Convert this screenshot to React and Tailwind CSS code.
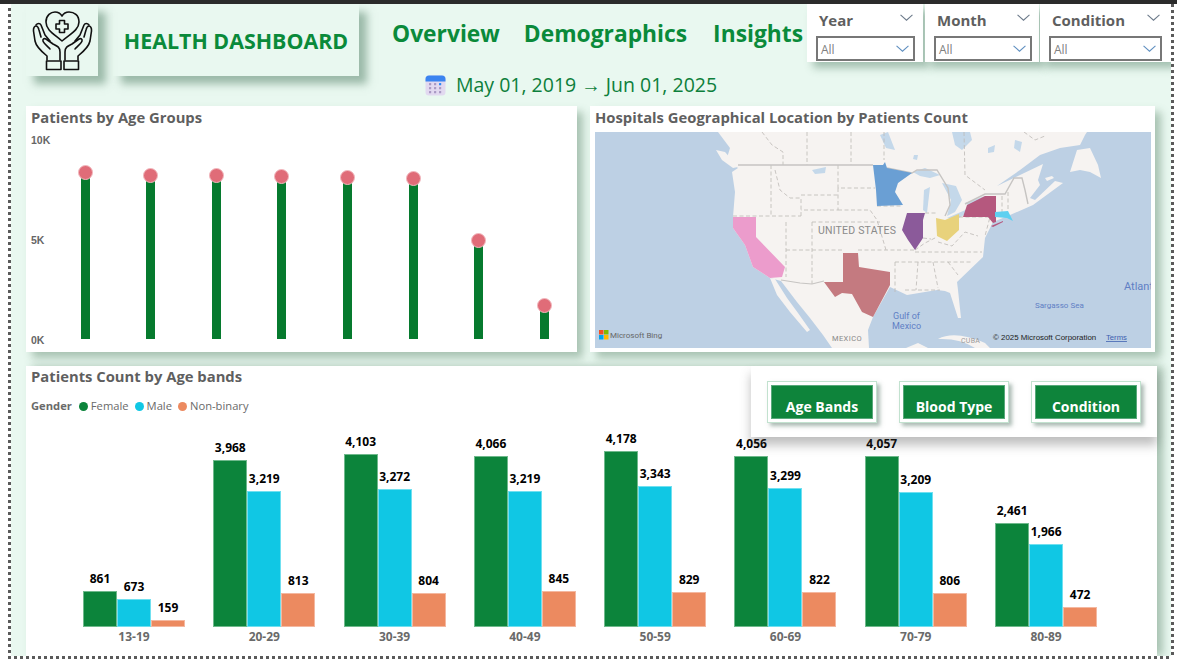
import React from "react";

const ageGroups = [8300, 8150, 8150, 8100, 8050, 8000, 4900, 1650];

const bands = [
  { label: "13-19", vals: [861, 673, 159] },
  { label: "20-29", vals: [3968, 3219, 813] },
  { label: "30-39", vals: [4103, 3272, 804] },
  { label: "40-49", vals: [4066, 3219, 845] },
  { label: "50-59", vals: [4178, 3343, 829] },
  { label: "60-69", vals: [4056, 3299, 822] },
  { label: "70-79", vals: [4057, 3209, 806] },
  { label: "80-89", vals: [2461, 1966, 472] },
];

const barColors = [
  "bg-[#0c843b] border-[#6fb98c]",
  "bg-[#10c7e4] border-[#70e0f0]",
  "bg-[#ec8a60] border-[#f4b8a0]",
];

const slicers = [
  { name: "Year", cls: "w-[116px] mr-[2px]", box: "w-[99px]", pad: "pl-[9px] pr-[8px]" },
  { name: "Month", cls: "w-[114px] mr-px", box: "w-[98px]", pad: "pl-[9px] pr-[7px]" },
  { name: "Condition", cls: "w-[131px]", box: "w-[113px]", pad: "pl-[9px] pr-[9px]" },
];

function Chevron({ className }) {
  return (
    <svg viewBox="0 0 12 6" className={className} fill="none" stroke="currentColor" strokeWidth="1">
      <path d="M0.5 0.5 L6 5.5 L11.5 0.5" />
    </svg>
  );
}

function Logo() {
  return (
    <svg viewBox="26 4 72 72" className="w-[72px] h-[72px]" fill="none" stroke="#111" strokeWidth="1.6" strokeLinejoin="round" strokeLinecap="round">
      {/* heart */}
      <path d="M62 41 C54 34 46 30 46 22 C46 15 51 12 55 12 C58 12 60.5 13.5 62 16 C63.5 13.5 66 12 69 12 C74 12 79 15 79 22 C79 30 70 34 62 41 Z" />
      <path d="M59.5 20.5 h5 v3.5 h3.5 v5 h-3.5 v3.5 h-5 v-3.5 h-3.5 v-5 h3.5 Z" />
      {/* left hand */}
      <path d="M47 60 V56 C42 52 36 46 35 41 L33.5 31 C33.2 28 34.5 26 36 26 C37.5 26 38.5 28 39 30 L41 37" />
      <path d="M36 25 C37.5 23 40 23 41 25 L45 35 L50 41" />
      <path d="M60 60 V52 C60 47 57 46 53 44 L46 39 C44 38 42.5 39 43 41 C43.5 43 47 46 50 49" />
      <rect x="46.5" y="61" width="14.5" height="8.5" />
      {/* right hand */}
      <path d="M78 60 V56 C83 52 89 46 90 41 L91.5 31 C91.8 28 90.5 26 89 26 C87.5 26 86.5 28 86 30 L84 37" />
      <path d="M89 25 C87.5 23 85 23 84 25 L80 35 L75 41" />
      <path d="M65 60 V52 C65 47 68 46 72 44 L79 39 C81 38 82.5 39 82 41 C81.5 43 78 46 75 49" />
      <rect x="64" y="61" width="14.5" height="8.5" />
    </svg>
  );
}

function CalendarIcon() {
  return (
    <svg viewBox="0 0 21 21" className="w-[21px] h-[21px]">
      <rect x="0.5" y="0.5" width="20" height="20" rx="3.5" fill="#e2d9f0" />
      <path d="M0.5 6.5 V4 a3.5 3.5 0 0 1 3.5 -3.5 H17 a3.5 3.5 0 0 1 3.5 3.5 V6.5 Z" fill="#3b84f0" />
      {[5, 10, 15].map((x) =>
        [9, 13, 17].map((y) => (
          <rect key={x + "-" + y} x={x - 1} y={y - 1} width="2.2" height="2.2" rx="0.5" fill={x === 15 && y === 9 ? "#2f8af5" : "#a999c4"} />
        ))
      )}
    </svg>
  );
}

// borders are page coordinates, the svg viewBox starts at the map's corner
const stateLines = [
  "M762 132 L772 145 L783 152 L783 165", "M807 132 V165", "M851 132 V165", "M884 132 V160",
  "M771 165 V216", "M733 216 H801", "M775 170 L780 190 L790 198 H801 V216",
  "M838 165 V188 H875", "M801 195 H838", "M838 188 V210 H801", "M838 210 H870 L877 220 L886 250",
  "M786 222 V277", "M812 222 H880", "M812 222 V284", "M786 250 H843",
  "M858 250 H915",
  "M877 206 H903",
  "M915 250 L925 243 L937 237", "M925 213 H936", "M923 238 L931 239",
  "M915 252 H982", "M895 262 H972", "M895 262 V292", "M918 262 L916 290", "M933 262 L938 288", "M948 262 L958 275",
  "M905 290 H940", "M938 242 L952 246 L965 232 L978 236", "M959 217 H990 L985 236",
  "M964 132 L965 175 L985 190", "M1002 196 V212", "M1008 192 V211",
  "M1024 132 L1035 140 L1045 136",
];

function MapPanel() {
  return (
    <svg viewBox="595 132 556 216" className="w-[556px] h-[216px] block">
      <rect x="595" y="132" width="556" height="216" fill="#bdd0e4" />
      {/* land */}
      <path fill="#f6f3f1" d="M718 132 L730 148 L727 158 L738 168 L732 172 L735 192 L733 217 L733 228 L745 245 L753 267 L770 278 L781 281 L797 302 L810 318 L823 335 L832 348 H869 L868 330 L873 317 L890 287 L907 295 L937 290 L945 291 L950 293 L958 318 L961 318 L958 290 L957 282 L983 257 L985 238 L993 222 L1010 215 L1033 205 L1063 183 L1055 181 L1035 200 L1030 198 L1040 185 L1038 180 L1043 164 L1020 175 L997 186 L1020 170 L1040 155 L1060 148 L1080 145 L1085 135 L1087 132 Z" />
      <path fill="#f6f3f1" d="M1077 150 L1090 148 L1098 165 L1101 178 L1090 172 L1080 170 L1070 172 Z" />
      <path fill="#f6f3f1" d="M1045 178 L1052 176 L1054 178 L1047 181 Z" />
      {/* vancouver island and baja */}
      <path fill="#f6f3f1" d="M716 150 L725 152 L738 167 L733 168 L722 160 Z" />
      <path fill="#f6f3f1" d="M770 278 L777 295 L790 312 L807 332 L810 330 L798 313 L787 298 L775 279 Z" />
      {/* cuba and islands */}
      <path fill="#f6f3f1" d="M938 339 Q955 330 985 343 L990 348 H975 Q960 338 938 339 Z" />
      <path fill="#f6f3f1" d="M906 348 L918 343 L928 348 Z" />
      {/* lakes and bays */}
      <g fill="#c4d8ea">
        <path d="M952 132 H970 L972 140 L962 150 L955 145 Z" />
        <path d="M913 172 L925 168 L940 175 L930 178 L920 176 Z" />
        <path d="M924 190 L930 187 L927 213 L923 210 Z" />
        <path d="M942 183 L956 186 L962 200 L955 212 L947 216 L951 200 Z" />
        <path d="M947 218 L970 208 L973 210 L955 220 Z" />
        <path d="M965 203 L985 196 L986 199 L970 206 Z" />
        <path d="M880 135 L888 132 L895 150 L886 148 Z" />
        <path d="M812 170 L826 167 L825 173 L815 174 Z" />
        <path d="M914 155 L918 155 L917 160 L913 159 Z" />
        <path d="M988 148 L995 145 L994 152 L988 153 Z" />
        <path d="M1015 140 L1022 142 L1020 152 L1014 148 Z" />
      </g>
      {/* state borders */}
      <g fill="none" stroke="#bdb9b5" strokeWidth="0.8" strokeDasharray="4 2.5">
        {stateLines.map((d) => (
          <path key={d} d={d} />
        ))}
      </g>
      {/* national border */}
      <path d="M738 165 H873 M887 168 L912 173 L917 170 L937 170 L948 188 L950 205 L945 216 M965 204 L985 194 L1005 194 L1014 178 L1022 178 L1025 190 L1028 204" fill="none" stroke="#c6c4c2" strokeWidth="1.4" />
      <path d="M781 280 L800 283 L812 284 L824 281" fill="none" stroke="#c6c4c2" strokeWidth="1.2" />
      {/* highlighted states */}
      <path fill="#6a9fd4" d="M873 165 H883 L885 162 L887 168 L912 173 L898 183 L895 192 L903 205 L877 206 L876 190 Z" />
      <path fill="#8b5a9a" d="M907 213 H925 L923 220 L923 238 L915 250 L908 240 L902 230 Z" />
      <path fill="#e8d27c" d="M936 218 L945 220 L959 214 V230 L947 241 L937 236 Z" />
      <path fill="#b5587e" d="M963 217 L967 205 L985 196 H996 V222 L993 223 L988 217 Z" />
      <path fill="#b5587e" d="M991 226 L1003 221 L1003 222 L993 227 Z" />
      <path fill="#5ed0f0" d="M995 212 L1008 211 L1013 221 L1007 218 L995 217 Z" />
      <path fill="#ec9ccc" d="M733 217 H756 V237 L785 267 L782 277 L770 278 L753 267 L745 245 L733 228 Z" />
      <path fill="#c47a80" d="M843 253 H858 L859 267 L890 272 V285 L873 317 L862 312 L852 294 L842 293 L835 297 L824 282 H843 Z" />
      {/* map labels */}
      <g fontFamily="Roboto, sans-serif">
        <text x="818" y="234" fontSize="10.5" fill="#8a8a8a" letterSpacing="0.2">UNITED STATES</text>
        <text x="832" y="341" fontSize="7.5" fill="#888" letterSpacing="0.4">MEXICO</text>
        <text x="961" y="343" fontSize="7" fill="#999" letterSpacing="0.3">CUBA</text>
        <text x="893" y="319" fontSize="9" fill="#5f7fc4">Gulf of</text>
        <text x="892" y="329" fontSize="9" fill="#5f7fc4">Mexico</text>
        <text x="1035" y="308" fontSize="8" fill="#5f7fc4">Sargasso Sea</text>
        <text x="1124" y="290" fontSize="11" fill="#5f7fc4">Atlant</text>
      </g>
      {/* bing attribution */}
      <rect x="599" y="330" width="4.5" height="4.5" fill="#f25022" />
      <rect x="604" y="330" width="4.5" height="4.5" fill="#7fba00" />
      <rect x="599" y="335" width="4.5" height="4.5" fill="#00a4ef" />
      <rect x="604" y="335" width="4.5" height="4.5" fill="#ffb900" />
      <text x="610" y="338" fontSize="8" fill="#666" fontFamily="Roboto, sans-serif">Microsoft Bing</text>
      <text x="993" y="340" fontSize="7.9" fill="#222" fontFamily="'Liberation Sans', sans-serif">© 2025 Microsoft Corporation</text>
      <text x="1106" y="340" fontSize="7.7" fill="#3d5fb0" textDecoration="underline" fontFamily="'Liberation Sans', sans-serif">Terms</text>
    </svg>
  );
}

function AgeGroupsCard() {
  return (
    <div className="w-[551px] h-[246px] bg-white shadow-[6px_6px_8px_rgba(90,130,105,0.45)] pl-[5px] pt-px">
      <h2 className="h-[20px] text-[14.8px] leading-[20px] font-bold text-[#5f5f5f] whitespace-nowrap">Patients by Age Groups</h2>
      <div className="flex mt-[7px]">
        <div className="w-[23px] h-[212px] flex flex-col justify-between text-[10.5px] leading-[12px] font-bold text-[#666] font-['Liberation_Sans',sans-serif]">
          <span>10K</span>
          <span>5K</span>
          <span>0K</span>
        </div>
        <div className="h-[205px] flex items-end">
          {ageGroups.map((v, i) => (
            <div key={i} className="w-[65.6px] flex justify-center">
              <div className="relative w-[9px] bg-[#067a2e]" style={{ height: v * 0.02 }}>
                <div className="absolute -top-[8px] -left-[3px] w-[15px] h-[15px] rounded-full bg-[#e06c78] border border-[#f2b8be]" />
              </div>
            </div>
          ))}
        </div>
      </div>
    </div>
  );
}

function BandsCard() {
  return (
    <div className="relative w-[1131px] h-[290px] bg-white shadow-[6px_0_8px_rgba(90,130,105,0.45)]">
      <div className="pl-[5px]">
        <h2 className="h-[20px] text-[14.8px] leading-[20px] font-bold text-[#5f5f5f] whitespace-nowrap">Patients Count by Age bands</h2>
        <div className="flex items-center h-[16px] mt-[12px] text-[11.2px] text-[#6a6a6a]">
          <span className="font-bold mr-[7px]">Gender</span>
          <span className="w-[9px] h-[9px] rounded-full bg-[#0c843b] mr-[3px]" />
          <span className="mr-[6px]">Female</span>
          <span className="w-[9px] h-[9px] rounded-full bg-[#10c7e4] mr-[3px]" />
          <span className="mr-[6px]">Male</span>
          <span className="w-[9px] h-[9px] rounded-full bg-[#ec8a60] mr-[3px]" />
          <span>Non-binary</span>
        </div>
      </div>
      <div className="flex pl-[42.85px] mt-[7px]">
        {bands.map((b) => (
          <div key={b.label} className="w-[130.3px] flex flex-col items-center">
            <div className="h-[206px] flex items-end">
              {b.vals.map((v, i) => (
                <div key={i} className="w-[34px] flex flex-col items-center">
                  <span className="text-[12px] leading-[16px] font-bold text-black mb-[4px] whitespace-nowrap">{v.toLocaleString("en-US")}</span>
                  <div className={"w-[34px] border " + barColors[i]} style={{ height: v * 0.0421 }} />
                </div>
              ))}
            </div>
            <span className="text-[12px] leading-[20px] font-bold text-[#6a6a6a]">{b.label}</span>
          </div>
        ))}
      </div>

      {/* button overlay */}
      <div className="absolute top-0 right-0 w-[406px] h-[71px] bg-white shadow-[0_8px_10px_rgba(70,70,70,0.35)] flex items-start pt-[15px] pl-[16px] gap-[22px]">
        {["Age Bands", "Blood Type", "Condition"].map((t) => (
          <div key={t} className="w-[110px] h-[42px] bg-white border border-[#c2e2cf] p-[3px] shadow-[3px_3px_4px_rgba(90,120,105,0.5)]">
            <div className="h-[34px] bg-[#0e843b] border border-[#58a87a] flex items-end justify-center pb-px text-[14px] leading-[20px] font-bold text-white">{t}</div>
          </div>
        ))}
      </div>
    </div>
  );
}

export default function App() {
  return (
    <div className="w-[1177px] h-[661px] overflow-hidden bg-white flex flex-col font-['Open_Sans','Noto_Sans',sans-serif]">
      <div className="h-[4px] bg-[#2b2b2b] shrink-0" />
      <div className="flex h-[652px]">
        <div className="w-[8px] shrink-0" />
        <div className="w-[3px] shrink-0 mt-[4px] bg-[repeating-linear-gradient(180deg,#5a5a5a_0_3px,transparent_3px_6px)]" />
        <main className="w-[1160px] bg-[#e9f8f0] pl-[15px] overflow-hidden">
          {/* header */}
          <div className="flex items-start h-[102px] relative">
            <div className="w-[72px] h-[72px] shadow-[8px_8px_8px_rgba(80,125,100,0.5)]">
              <Logo />
            </div>
            <div className="w-[246px] h-[72px] ml-[15px] pt-[2px] shadow-[8px_8px_8px_rgba(80,125,100,0.5)] flex items-center justify-center">
              <span className="text-[21.4px] font-bold text-[#0a8a3a] whitespace-nowrap">HEALTH DASHBOARD</span>
            </div>
            <div className="w-[448px] flex flex-col">
              <nav className="flex h-[32px] mt-[14px] pl-[33px] text-[22.8px] leading-[32px] font-bold text-[#0a8a3a] whitespace-nowrap">
                <span>Overview</span>
                <span className="ml-[24px]">Demographics</span>
                <span className="ml-[26px]">Insights</span>
              </nav>
              <div className="flex items-center h-[30px] mt-[20px] pl-[66px]">
                <CalendarIcon />
                <span className="ml-[10px] text-[19.5px] leading-[30px] font-medium text-[#0d7f3b] whitespace-nowrap">May 01, 2019 → Jun 01, 2025</span>
              </div>
            </div>
            <div className="flex">
              {slicers.map((s) => (
                <div key={s.name} className={"h-[58px] bg-white shadow-[6px_6px_8px_rgba(80,125,100,0.45)] " + s.cls + " " + s.pad}>
                  <div className="flex justify-between h-[32px] pl-[3px] pr-[2px]">
                    <span className="text-[15px] leading-[32px] font-bold text-[#5f5f5f]">{s.name}</span>
                    <Chevron className="w-[13px] h-[7px] mt-[10px] text-[#6c7a8a]" />
                  </div>
                  <div className={"h-[25px] border-2 border-[#777] bg-white flex items-center justify-between pl-[3px] pr-[4px] " + s.box}>
                    <span className="text-[12px] text-[#808080] leading-[14px] pt-[3px]">All</span>
                    <Chevron className="w-[13px] h-[7px] text-[#5f8fc0]" />
                  </div>
                </div>
              ))}
            </div>
          </div>

          {/* middle row */}
          <div className="flex gap-[13px]">
            <AgeGroupsCard />
            <div className="w-[565px] h-[246px] bg-white shadow-[6px_6px_8px_rgba(90,130,105,0.45)] pl-[5px] pt-px">
              <h2 className="h-[25px] text-[14.8px] leading-[20px] font-bold text-[#5f5f5f] whitespace-nowrap">Hospitals Geographical Location by Patients Count</h2>
              <MapPanel />
            </div>
          </div>

          <div className="mt-[14px]">
            <BandsCard />
          </div>
        </main>
        <div className="w-[3px] shrink-0 bg-[repeating-linear-gradient(180deg,#5a5a5a_0_3px,transparent_3px_6px)]" />
      </div>
      <div className="h-[3px] mx-[8px] shrink-0 bg-[repeating-linear-gradient(90deg,#5a5a5a_0_3px,transparent_3px_6px)]" />
    </div>
  );
}
